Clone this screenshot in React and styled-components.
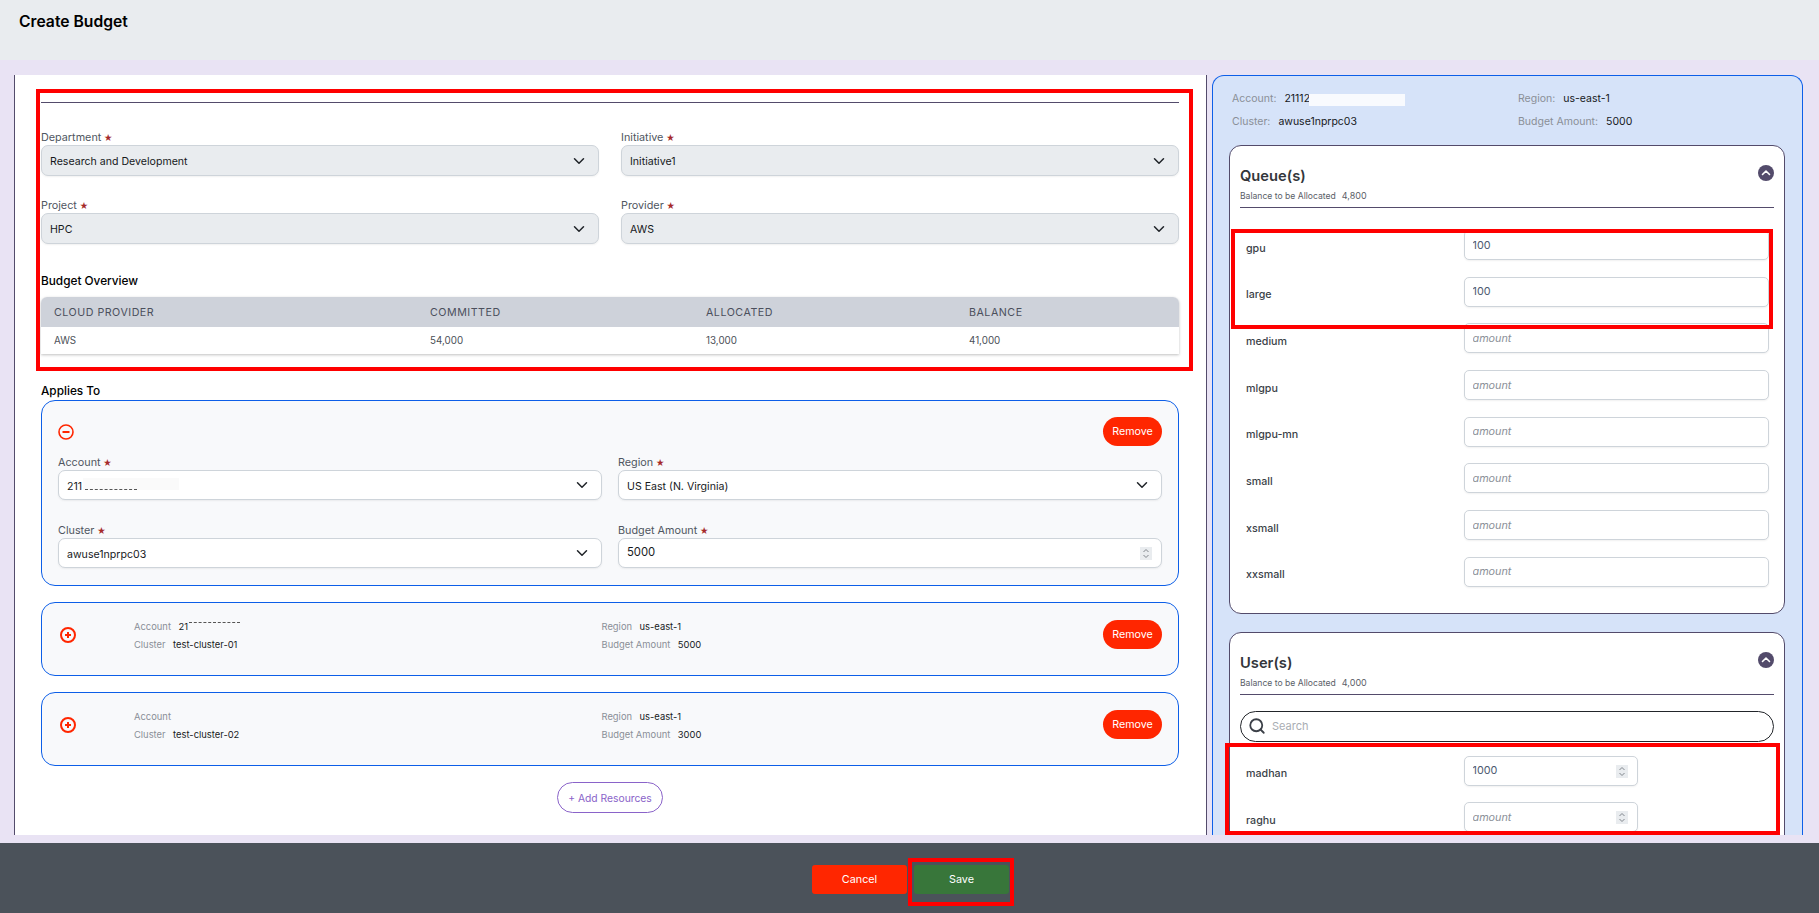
import React from "react"
import styled, { createGlobalStyle } from "styled-components"
import { Search } from "lucide-react"

const GlobalStyle = createGlobalStyle`
  html, body { margin: 0; padding: 0; height: 100%; overflow: hidden; }
  body { font-family: Inter, "Liberation Sans", sans-serif; }
  * { box-sizing: border-box; }
`

const Page = styled.div`
  display: flex;
  flex-direction: column;
  height: 913px;
  background: #e9e3f4;
`
const TopBar = styled.header`
  height: 60px;
  flex: none;
  padding: 11px 19px 0;
  background: #e9ecef;
`
const Title = styled.h1`
  margin: 0;
  font-size: 15.7px;
  line-height: 21px;
  font-weight: 600;
  color: #000;
`
const Body = styled.div`
  flex: 1;
  min-height: 0;
  display: flex;
  gap: 5px;
  padding: 15px 16px 8px 14px;
`
const LeftPanel = styled.main`
  width: 1193px;
  flex: none;
  padding: 27px 27px 0 26px;
  overflow: hidden;
  background: #fff;
  border-left: 1px solid #534b6b;
  border-right: 1px solid #534b6b;
`
const RightPanel = styled.aside`
  width: 591px;
  flex: none;
  padding: 15px 17px 0 16px;
  overflow: hidden;
  background: #d6e3f9;
  border: 1px solid #0d5fe8;
  border-bottom: none;
  border-radius: 12px 12px 0 0;
`
const Section = styled.section`
  position: relative;
`
const RedBox = styled.div`
  position: absolute;
  top: ${p => p.$top}px;
  left: ${p => p.$left}px;
  width: ${p => p.$width}px;
  height: ${p => p.$height}px;
  border: 4px solid #ff0000;
  pointer-events: none;
`
const Rule = styled.hr`
  margin: 0;
  border: none;
  border-top: 1px solid #534b6b;
`
const FormGrid = styled.div`
  display: grid;
  grid-template-columns: repeat(2, 1fr);
  column-gap: ${p => p.$gap}px;
  row-gap: 22px;
`
const TopForm = styled(FormGrid)`
  margin-top: 26px;
  row-gap: 21px;
`
const Label = styled.div`
  height: 16px;
  font-size: 10.8px;
  line-height: 17px;
  color: #4f5661;
`
const Star = styled.span`
  margin-left: 2.5px;
  color: #a52a2a;
  font-size: 8.5px;
`
const SelectBox = styled.div`
  position: relative;
  display: flex;
  align-items: center;
  height: ${p => p.$grey ? 31 : 30}px;
  padding: 2px 8px 0;
  font-size: 10.6px;
  color: #17191c;
  background: ${p => p.$grey ? "#e9ecef" : "#fff"};
  border: 1px solid #ced4da;
  border-radius: 7px;
  box-shadow: 0 1px 2px rgba(0, 0, 0, 0.06);
`
const Caret = styled.svg`
  position: absolute;
  right: 13px;
  top: 50%;
  width: 12px;
  height: 12px;
  margin-top: -6px;
  fill: none;
  stroke: #1f2328;
  stroke-width: 2;
  stroke-linecap: round;
  stroke-linejoin: round;
`
const Heading = styled.h3`
  margin: 0;
  font-size: 11.8px;
  line-height: 18px;
  font-weight: 500;
  color: #000;
`
const OverviewHeading = styled(Heading)`
  margin: 28px 0 7px;
`
const AppliesHeading = styled(Heading)`
  margin-top: 28px;
`
const OverviewTable = styled.div`
  border-radius: 6px 6px 0 0;
  overflow: hidden;
  box-shadow: 0 1px 3px rgba(0, 0, 0, 0.25);
`
const TableRow = styled.div`
  display: grid;
  grid-template-columns: 376px 276px 263px 1fr;
  align-items: center;
  height: ${p => p.$head ? 30 : 27}px;
  padding-left: 13px;
  background: ${p => p.$head ? "#ced2da" : "#fff"};
  color: ${p => p.$head ? "#4b4f5c" : "#4b4f57"};
  font-size: ${p => p.$head ? 10.7 : 9.8}px;
  letter-spacing: ${p => p.$head ? 0.5 : 0}px;
`
const Card = styled.div`
  margin-bottom: 16px;
  background: #f8f9fb;
  border: 1px solid #0d5fe8;
  border-radius: 14px;
`
const OpenCard = styled(Card)`
  height: 186px;
  padding: 16px 16px 0;
`
const SummaryCard = styled(Card)`
  display: flex;
  align-items: flex-start;
  height: 74px;
  padding: 17px 16px 0 18px;
`
const CardTop = styled.div`
  display: flex;
  justify-content: space-between;
  align-items: center;
  margin-bottom: 8px;
`
const RoundIcon = styled.svg`
  display: block;
  flex: none;
  width: 16px;
  height: 16px;
  fill: none;
  stroke: #ff2600;
  stroke-width: ${p => p.$bold ? 2 : 1.6};
`
const PlusIcon = styled(RoundIcon)`
  margin: 7px 58px 0 0;
`
const RemoveButton = styled.button`
  flex: none;
  width: 59px;
  height: 29px;
  padding: 0;
  border: none;
  border-radius: 15px;
  background: #ff2600;
  color: #fff;
  font: 400 10.7px Inter, sans-serif;
`
const SummaryGrid = styled.div`
  flex: 1;
  display: grid;
  grid-template-columns: 467.5px 1fr;
  row-gap: 3.5px;
  margin-top: -1.5px;
`
const Pair = styled.div`
  position: relative;
  display: flex;
  gap: 7.5px;
  height: 15px;
  font-size: 9.4px;
  line-height: 15px;
  color: #17191c;
`
const PairKey = styled.span`
  color: #8a8f97;
`
const AddButton = styled.button`
  display: block;
  width: 106px;
  height: 31px;
  margin: 0 auto;
  padding: 0;
  background: #fff;
  border: 1px solid #8a63c9;
  border-radius: 16px;
  color: #8a63c9;
  font: 400 10.3px Inter, sans-serif;
`
const Masked = styled.span`
  position: absolute;
  left: ${p => p.$left}px;
  top: ${p => p.$top}px;
  width: ${p => p.$width}px;
  height: ${p => p.$height}px;
  background: ${p => p.$fill || "transparent"};
  border-bottom: ${p => p.$dash ? "1px dashed #555" : "none"};
`
const TopDash = styled.span`
  position: absolute;
  left: 55px;
  top: 3px;
  width: 51px;
  border-top: 1px dashed #555;
`
const InfoGrid = styled.div`
  display: grid;
  grid-template-columns: 286px 1fr;
  row-gap: 7px;
  margin: 0 0 15px 3px;
`
const InfoPair = styled.div`
  position: relative;
  display: flex;
  gap: 8px;
  height: 16px;
  font-size: 10.5px;
  line-height: 16px;
  color: #17191c;
`
const Box = styled.div`
  margin-bottom: 18px;
  padding: 20px 10px 26px 10px;
  background: #fff;
  border: 1px solid #534b6b;
  border-radius: 12px;
`
const BoxHead = styled.div`
  position: relative;
  height: 42px;
  border-bottom: 1px solid #534b6b;
  margin-bottom: ${p => p.$after}px;
`
const BoxTitle = styled.h2`
  margin: 0 0 4px;
  font-size: 14.7px;
  line-height: 20px;
  font-weight: 600;
  color: #33363b;
`
const Balance = styled.div`
  font-size: 8.6px;
  line-height: 12px;
  color: #5b6068;
  span { margin-left: 6px; font-size: 9px; }
`
const Collapse = styled.svg`
  position: absolute;
  right: 0;
  top: -1px;
  width: 16px;
  height: 16px;
  fill: #534b6b;
  stroke: none;
`
const RowList = styled.div`
  position: relative;
  display: grid;
  row-gap: ${p => p.$gap}px;
`
const AmountRow = styled.div`
  display: grid;
  grid-template-columns: 224px ${p => p.$inputWidth}px;
  align-items: center;
`
const RowName = styled.div`
  padding: 6px 0 0 6px;
  font-size: 10.7px;
  font-weight: 500;
  color: #3a3f47;
`
const InputWrap = styled.div`
  position: relative;
  height: 30px;
`
const AmountInput = styled.input`
  display: block;
  width: 100%;
  height: 100%;
  padding: 0 8px 0 7.5px;
  font: 400 10.8px Inter, sans-serif;
  color: #4d5a70;
  background: #fff;
  border: 1px solid #ced4da;
  border-radius: 5px;
  box-shadow: 0 1px 2px rgba(0, 0, 0, 0.06);
  outline: none;
  &::placeholder { color: #8b9098; font-style: italic; opacity: 1; }
`
const BudgetInput = styled(AmountInput)`
  padding: 0 8px 2px;
  border-radius: 7px;
  font-size: 11.3px;
  color: #17191c;
`
const Spinner = styled.svg`
  position: absolute;
  right: 10px;
  top: 50%;
  width: 12px;
  height: 13px;
  margin-top: -6px;
  background: #e9ecef;
  fill: none;
  stroke: #80858c;
  stroke-width: 1;
`
const SearchBar = styled.div`
  display: flex;
  align-items: center;
  gap: 6px;
  height: 31px;
  margin-bottom: 14px;
  padding: 0 7px;
  border: 1px solid #22252a;
  border-radius: 16px;
  color: #3c4048;
`
const SearchInput = styled.input`
  flex: 1;
  min-width: 0;
  padding: 0;
  border: none;
  outline: none;
  background: none;
  font: 400 11px Inter, sans-serif;
  &::placeholder { color: #a9adb3; opacity: 1; }
`
const BottomBar = styled.footer`
  height: 70px;
  flex: none;
  display: flex;
  justify-content: center;
  gap: 7px;
  padding: 22px 0 0 2px;
  background: #4b525a;
`
const FootButton = styled.button`
  position: relative;
  width: 95px;
  height: 29px;
  padding: 0;
  border: none;
  border-radius: 3px;
  background: ${p => p.$save ? "#38763a" : "#ff2600"};
  color: #fff;
  font: 400 10.8px Inter, sans-serif;
`

const queues = [["gpu", "100"], ["large", "100"], ["medium"], ["mlgpu"], ["mlgpu-mn"], ["small"], ["xsmall"], ["xxsmall"]]

const Field = ({ label, children }) => (
  <div>
    <Label>{label}<Star>★</Star></Label>
    {children}
  </div>
)

const Select = ({ grey, children }) => (
  <SelectBox $grey={grey}>
    {children}
    <Caret viewBox="0 0 16 16"><path d="M2 5l6 6 6-6" /></Caret>
  </SelectBox>
)

const SpinArrows = () => (
  <Spinner viewBox="0 0 12 13"><path d="M3.5 5L6 2.5 8.5 5M3.5 8L6 10.5 8.5 8" /></Spinner>
)

const ChevronCircle = () => (
  <Collapse viewBox="0 0 16 16">
    <circle cx="8" cy="8" r="8" />
    <path d="M4.5 9.5L8 6l3.5 3.5" fill="none" stroke="#fff" strokeWidth="1.6" strokeLinecap="round" strokeLinejoin="round" />
  </Collapse>
)

const Summary = ({ cluster, amount, children }) => (
  <SummaryCard>
    <PlusIcon viewBox="0 0 16 16" $bold>
      <circle cx="8" cy="8" r="7" />
      <path d="M8 5v6M5 8h6" />
    </PlusIcon>
    <SummaryGrid>
      <Pair><PairKey>Account</PairKey>{children}</Pair>
      <Pair><PairKey>Region</PairKey>us-east-1</Pair>
      <Pair><PairKey>Cluster</PairKey>{cluster}</Pair>
      <Pair><PairKey>Budget Amount</PairKey>{amount}</Pair>
    </SummaryGrid>
    <RemoveButton>Remove</RemoveButton>
  </SummaryCard>
)

function App() {
  return (
    <Page>
      <GlobalStyle />
      <TopBar><Title>Create Budget</Title></TopBar>
      <Body>
        <LeftPanel>
          <Section>
            <RedBox $top={-13} $left={-5} $width={1157} $height={282} />
            <Rule />
            <TopForm $gap={22}>
              <Field label="Department"><Select grey>Research and Development</Select></Field>
              <Field label="Initiative"><Select grey>Initiative1</Select></Field>
              <Field label="Project"><Select grey>HPC</Select></Field>
              <Field label="Provider"><Select grey>AWS</Select></Field>
            </TopForm>
            <OverviewHeading>Budget Overview</OverviewHeading>
            <OverviewTable>
              <TableRow $head>
                <span>CLOUD PROVIDER</span><span>COMMITTED</span><span>ALLOCATED</span><span>BALANCE</span>
              </TableRow>
              <TableRow>
                <span>AWS</span><span>54,000</span><span>13,000</span><span>41,000</span>
              </TableRow>
            </OverviewTable>
          </Section>

          <AppliesHeading>Applies To</AppliesHeading>
          <OpenCard>
            <CardTop>
              <RoundIcon viewBox="0 0 16 16">
                <circle cx="8" cy="8" r="7" />
                <path d="M4.5 8h7" strokeWidth="2" />
              </RoundIcon>
              <RemoveButton>Remove</RemoveButton>
            </CardTop>
            <FormGrid $gap={16}>
              <Field label="Account">
                <Select>
                  211
                  <Masked $left={24} $top={7} $width={96} $height={12} $fill="#fafafa" />
                  <Masked $left={26} $top={18} $width={52} $height={1} $dash />
                </Select>
              </Field>
              <Field label="Region"><Select>US East (N. Virginia)</Select></Field>
              <Field label="Cluster"><Select>awuse1nprpc03</Select></Field>
              <Field label="Budget Amount">
                <InputWrap>
                  <BudgetInput readOnly value="5000" />
                  <SpinArrows />
                </InputWrap>
              </Field>
            </FormGrid>
          </OpenCard>
          <Summary cluster="test-cluster-01" amount="5000">
            <span>21</span><TopDash />
          </Summary>
          <Summary cluster="test-cluster-02" amount="3000" />
          <AddButton>+ Add Resources</AddButton>
        </LeftPanel>

        <RightPanel>
          <InfoGrid>
            <InfoPair>
              <PairKey>Account:</PairKey>21112
              <Masked $left={77} $top={3} $width={96} $height={12} $fill="#f8fafe" />
            </InfoPair>
            <InfoPair><PairKey>Region:</PairKey>us-east-1</InfoPair>
            <InfoPair><PairKey>Cluster:</PairKey>awuse1nprpc03</InfoPair>
            <InfoPair><PairKey>Budget Amount:</PairKey>5000</InfoPair>
          </InfoGrid>

          <Box>
            <BoxHead $after={22}>
              <BoxTitle>Queue(s)</BoxTitle>
              <Balance>Balance to be Allocated<span>4,800</span></Balance>
              <ChevronCircle />
            </BoxHead>
            <RowList $gap={16.7}>
              {queues.map(([name, value]) => (
                <AmountRow key={name} $inputWidth={305}>
                  <RowName>{name}</RowName>
                  <InputWrap>
                    <AmountInput readOnly value={value || ""} placeholder="amount" />
                  </InputWrap>
                </AmountRow>
              ))}
              <RedBox $top={-1} $left={-9} $width={542} $height={100} />
            </RowList>
          </Box>

          <Box>
            <BoxHead $after={16}>
              <BoxTitle>User(s)</BoxTitle>
              <Balance>Balance to be Allocated<span>4,000</span></Balance>
              <ChevronCircle />
            </BoxHead>
            <SearchBar>
              <Search size={18} strokeWidth={2.4} />
              <SearchInput placeholder="Search" />
            </SearchBar>
            <RowList $gap={16.5}>
              <AmountRow $inputWidth={174}>
                <RowName>madhan</RowName>
                <InputWrap>
                  <AmountInput readOnly value="1000" />
                  <SpinArrows />
                </InputWrap>
              </AmountRow>
              <AmountRow $inputWidth={174}>
                <RowName>raghu</RowName>
                <InputWrap>
                  <AmountInput readOnly value="" placeholder="amount" />
                  <SpinArrows />
                </InputWrap>
              </AmountRow>
              <RedBox $top={-13} $left={-15} $width={555} $height={92} />
            </RowList>
          </Box>
        </RightPanel>
      </Body>
      <BottomBar>
        <FootButton>Cancel</FootButton>
        <FootButton $save>
          Save
          <RedBox $top={-7} $left={-6} $width={106} $height={48} />
        </FootButton>
      </BottomBar>
    </Page>
  )
}

export default App
